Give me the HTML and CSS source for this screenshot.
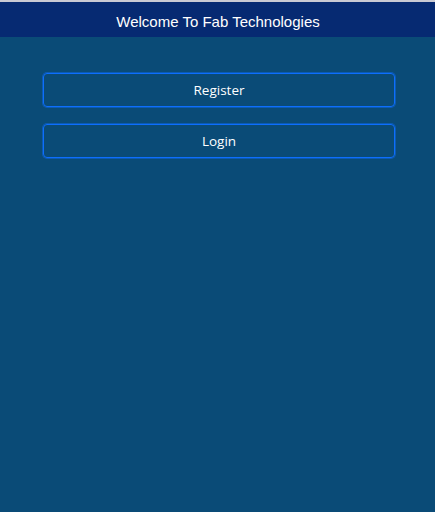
FILE: index.html
```html
<!DOCTYPE html>
<html>
<head>
<meta charset="utf-8">
<link rel="stylesheet" href="styles.css">
</head>
<body>
<div class="topline"></div>
<header class="header">Welcome To Fab Technologies</header>
<main class="content">
  <button class="btn">Register</button>
  <button class="btn">Login</button>
</main>
</body>
</html>
```
FILE: styles.css
```css
html, body {
  margin: 0;
  padding: 0;
  height: 100%;
}
body {
  background: #0a4b77;
  font-family: "Open Sans", "Noto Sans", sans-serif;
}
.topline {
  height: 2px;
  background: #c9cad3;
}
.header {
  height: 35px;
  box-sizing: border-box;
  padding: 3px 0 0 1px;
  background: #062a72;
  color: #ffffff;
  font-family: "Liberation Sans", Arial, sans-serif;
  font-size: 15px;
  display: flex;
  align-items: center;
  justify-content: center;
}
.content {
  display: flex;
  flex-direction: column;
  gap: 17px;
  padding: 36px 40px 0 43px;
}
.btn {
  height: 34px;
  background: transparent;
  border: 1px solid #0d6efd;
  box-shadow: 0 0 0 1px rgba(13, 110, 253, 0.45);
  border-radius: 4px;
  color: #ffffff;
  font-family: "Open Sans", "Noto Sans", sans-serif;
  font-size: 13.5px;
  padding: 0;
}
```
